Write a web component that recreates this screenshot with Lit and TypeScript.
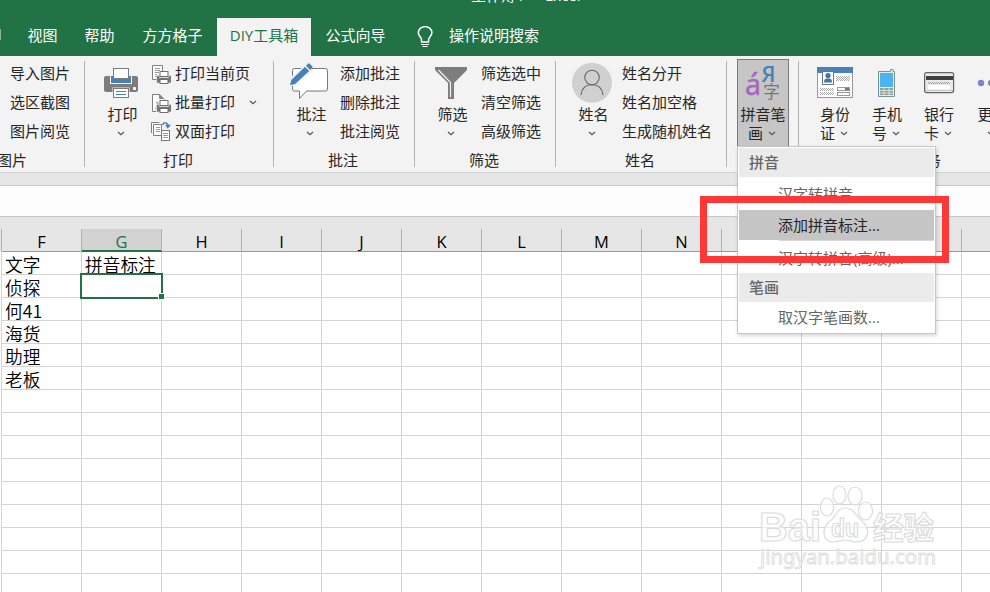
import { LitElement, html, css, svg, nothing, TemplateResult } from "lit";
import { customElement, property } from "lit/decorators.js";

const printerSmall = (x: number, y: number) => svg`
  <path d="M${x - 1.5} ${y + 4}h3v2h9v-2h3v7.500h-15z" fill="#777" stroke="#f3f3f3" stroke-width=".6" />
  <rect x=${x + 2} y=${y} width="8" height="5" fill="#fff" stroke="#6f6f6f" />
  <rect x=${x + 2} y=${y + 8} width="8" height="4" fill="#fff" stroke="#6f6f6f" />`;

const icons: Record<string, TemplateResult> = {
  printer: html`<svg viewBox="101 62 40 41">
    <rect x="104" y="76" width="34" height="16" rx="2" fill="#7d7d7d" />
    <rect x="110" y="76" width="22" height="8" fill="#f3f3f3" />
    <rect x="111" y="76" width="20" height="7" fill="#4a80ba" />
    <rect x="113.5" y="68.5" width="15" height="10" fill="#fff" stroke="#7d7d7d" />
    <rect x="133" y="87" width="3" height="3" rx="1" fill="#fff" />
    <rect x="112.5" y="87.5" width="17" height="11" fill="#f3f3f3" />
    <rect x="113.5" y="88.5" width="15" height="9" fill="#fff" stroke="#7d7d7d" />
    <path d="M116 91.5h10M116 94.5h10" stroke="#4a80ba" />
  </svg>`,
  comment: html`<svg viewBox="290 62 40 41">
    <path d="M294.500 68.500h31a2 2 0 0 1 2 2v18.500a2 2 0 0 1-2 2h-19l-7 7.500v-7.500h-5a2 2 0 0 1-2-2v-18.500a2 2 0 0 1 2-2z" fill="#fff" stroke="#777" />
    <path d="M288 87l2-9 16.500-14.500 7 7-16.500 14.500z" fill="#f3f3f3" />
    <path d="M299 84.500l12-11v4l-8 7z" fill="#fff" />
    <path d="M290 85.200l1.300-5.200 13.700-13.200 4.200 4.200-14 13z" fill="#4a80ba" />
    <path d="M306 65.800l2-2a1.200 1.200 0 0 1 1.700 0l2.500 2.500a1.200 1.200 0 0 1 0 1.700l-2 2z" fill="#4a80ba" />
  </svg>`,
  filter: html`<svg viewBox="431 62 40 41">
    <path d="M435 67h32v3l-13 13v16h-6v-16l-13-13z" fill="#7d7d7d" />
    <path d="M438.500 70l12 12.500v14.500" fill="none" stroke="#f3f3f3" stroke-width="1.200" />
  </svg>`,
  person: html`<svg viewBox="572 62 40 41">
    <circle cx="592" cy="82.800" r="20" fill="#d0d0d0" />
    <circle cx="592" cy="77.500" r="7.200" fill="none" stroke="#666" stroke-width="1.100" />
    <path d="M581 95c.8-7.500 5.500-10.300 11-10.300s10.200 2.800 11 10.300" fill="none" stroke="#666" stroke-width="1.100" />
  </svg>`,
  pinyin: html`<svg viewBox="743 62 40 41">
    <text x="745" y="95" font-size="29" fill="#a367be" stroke="#a367be" stroke-width=".4" font-family="Noto Sans" textLength="16" lengthAdjust="spacingAndGlyphs">á</text>
    <text x="761.500" y="81.500" font-size="21.500" font-weight="600" fill="#4a80ba" font-family="Open Sans" textLength="14" lengthAdjust="spacingAndGlyphs">Я</text>
    <text x="763" y="98" font-size="17" fill="#777" font-family="Noto Sans CJK SC">字</text>
  </svg>`,
  idcard: html`<svg viewBox="815 62 40 41">
    <rect x="817.5" y="67.500" width="35" height="30" fill="#fff" stroke="#999" />
    <rect x="817" y="67" width="36" height="6" fill="#4a80ba" />
    <rect x="822.5" y="71.500" width="11" height="13" fill="#fff" stroke="#777" />
    <circle cx="828" cy="75.500" r="2.600" fill="#3e76b2" /><path d="M824 82.500c0-4 2-4 4-4s4 0 4 4z" fill="#3e76b2" />
    <path d="M836 76.500h14M836 78.500h14M836 80.500h14M820 88.500h14M820 90.500h14M820 92.500h14M820 94.500h14" stroke="#aaa" stroke-dasharray="1 1" />
    <path d="M837 77.500h13M837 79.500h13M821 89.500h13M821 93.500h13" stroke="#aaa" stroke-dasharray="1 1" />
    <rect x="837.5" y="87.500" width="12" height="3" fill="#fff" stroke="#999" /><rect x="845" y="88" width="4" height="2" fill="#4a80ba" />
    <rect x="837.5" y="92.500" width="12" height="3" fill="#fff" stroke="#999" />
  </svg>`,
  phone: html`<svg viewBox="867 62 40 41">
    <path d="M878.500 71.500h12v-2h2.500v2h1.500v25h-16z" fill="#e5ecec" stroke="#7a9492" />
    <rect x="880" y="73" width="13" height="14" fill="#4db2f0" />
    <rect x="880" y="88" width="13" height="7" fill="#8ca09c" />
    <path d="M880 90.500h13M880 93h13M884 88v7M889 88v7" stroke="#e5ecec" stroke-width=".8" />
  </svg>`,
  bank: html`<svg viewBox="919 62 40 41">
    <rect x="924.600" y="72.600" width="29" height="20" rx="2" fill="#e9e9e9" stroke="#666" stroke-width="1.200" />
    <rect x="926" y="76" width="27" height="4" fill="#404040" />
    <path d="M928 82.500h22M929 83.500h22" stroke="#999" stroke-dasharray="1 1" />
    <rect x="928" y="85" width="22" height="4" fill="#fff" />
    <path d="M926 90.500h27" stroke="#ccc" />
  </svg>`,
  more: html`<svg viewBox="971 62 40 41">
    <circle cx="981" cy="83" r="3.200" fill="#7a86c8" /><circle cx="991" cy="83" r="3.200" fill="#7a86c8" /><circle cx="1001" cy="83" r="3.200" fill="#7a86c8" />
  </svg>`,
  page: html`<svg viewBox="151 63 20 20">
    <path d="M152.500 64.500h10v14h-10z" fill="#fff" stroke="#808080" />
    <path d="M155 67.500h5M155 69.500h5M155 71.500h4M155 73.500h2M155 75.500h2" stroke="#999" />
    ${printerSmall(158, 70.5)}
  </svg>`,
  batch: html`<svg viewBox="151 92 20 20">
    <path d="M152.500 93.500h7l5 5v12h-12z" fill="#fff" stroke="#808080" /><path d="M159.500 93.500v4h4" fill="#888" stroke="#808080" />
    <path d="M156 102c1-1.500 3 0 2 2s-2 3-2 4" fill="none" stroke="#aaa" stroke-width="1.500" />
    ${printerSmall(158, 99.5)}
  </svg>`,
  duplex: html`<svg viewBox="151 121 20 20">
    <path d="M151.500 132v-10.500h8M153.500 134.500v-11h8v11z" fill="#fff" stroke="#808080" />
    <path d="M156 126.500h4M156 128.500h4M156 130.500h4" stroke="#999" />
    <rect x="161.500" y="129.500" width="8" height="10" fill="#fff" stroke="#777" />
    <path d="M163 132.500h5M163 134.500h5M163 136.500h5" stroke="#999" />
    <path d="M162.500 124c1-3.500 5.500-2.500 5.500 1" fill="none" stroke="#4a80ba" stroke-width="1.500" /><path d="M165 123.800h6l-3.300 4z" fill="#4a80ba" />
  </svg>`,
  bulb: html`<svg viewBox="417 26 16 22" fill="none" stroke="#fff" stroke-width="1.500">
    <path d="M421.500 42v-2.500c0-2-3.200-3.500-3.200-7a6.700 5.800 0 0 1 13.600 0c0 3.500-3.300 5-3.300 7v2.500z" /><path d="M421 44.500h8M422.500 46.500h5" stroke-width="1.200" />
  </svg>`,
};

const chevron = html`<svg class="chev" viewBox="0 0 8 5"><path d="M1 1l3 2.700 3-2.700" fill="none" stroke="#555" stroke-width="1.200" /></svg>`;

@customElement("big-button")
class BigButton extends LitElement {
  @property() icon = "";
  @property() label = "";
  @property() second = "";
  static styles = css`
    :host { display: flex; flex-direction: column; align-items: center; width: 52px; flex: none; box-sizing: border-box; height: 88px; padding-top: 3px; }
    :host([active]) { background: #c6c6c6; border: 1px solid #7b7b7b; padding-top: 2px; }
    svg { display: block; flex: none; width: 40px; height: 41px; }
    .chev { width: 8px; height: 5px; }
    .label { height: 22px; line-height: 22px; white-space: nowrap; }
    :host([shift]) .label { padding-left: 3px; }
    .second { display: flex; align-items: center; gap: 5px; height: 16px; line-height: 16px; }
    .second span { margin-left: -2px; }
  `;
  render() {
    return html`${icons[this.icon]}
      <div class="label">${this.label}</div>
      <div class="second">${this.second ? html`<span>${this.second}</span>` : nothing}${chevron}</div>`;
  }
}

interface Item { text: string; icon?: string; drop?: boolean }
interface Group { width: number; label: string; cls?: string; buttons: string[][]; items: Item[] }

const groups: Group[] = [
  { width: 84, label: "图片", cls: "cut", buttons: [], items: [{ text: "导入图片" }, { text: "选区截图" }, { text: "图片阅览" }] },
  { width: 188, label: "打印", buttons: [["printer", "打印", ""]], items: [{ text: "打印当前页", icon: "page" }, { text: "批量打印", icon: "batch", drop: true }, { text: "双面打印", icon: "duplex" }] },
  { width: 140, label: "批注", buttons: [["comment", "批注", ""]], items: [{ text: "添加批注" }, { text: "删除批注" }, { text: "批注阅览" }] },
  { width: 140, label: "筛选", buttons: [["filter", "筛选", ""]], items: [{ text: "筛选选中" }, { text: "清空筛选" }, { text: "高级筛选" }] },
  { width: 170, label: "姓名", buttons: [["person", "姓名", ""]], items: [{ text: "姓名分开" }, { text: "姓名加空格" }, { text: "生成随机姓名" }] },
  { width: 71, label: "", buttons: [["pinyin", "拼音笔", "画"]], items: [] },
  { width: 256, label: "财务", cls: "wide", buttons: [["idcard", "身份", "证"], ["phone", "手机", "号"], ["bank", "银行", "卡"], ["more", "更多", ""]], items: [] },
];

@customElement("ribbon-bar")
class RibbonBar extends LitElement {
  static styles = css`
    :host { display: flex; height: 116px; background: #f3f3f3; color: #262626; overflow: hidden; }
    .group { flex: none; display: flex; flex-direction: column; }
    .sep { flex: none; width: 1px; height: 106px; margin-top: 5px; background: #b3b3b3; }
    .body { display: flex; gap: 4px; padding: 3px 0 0 10px; height: 91px; box-sizing: border-box; }
    .items { display: flex; flex-direction: column; white-space: nowrap; }
    .item { display: flex; align-items: center; height: 29px; line-height: 29px; }
    .item svg { width: 20px; height: 20px; margin: 0 4px 0 0; }
    .item svg.chev { width: 8px; height: 5px; margin: 0 0 0 14px; }
    .label { text-align: center; height: 24px; line-height: 24px; padding: 1px 2px 0 0; }
    .cut .label { text-align: left; margin-left: -3px; }
    .wide .body { gap: 0; }
  `;
  render() {
    return groups.map((g) => html`
      <div class="group ${g.cls ?? ""}" style="width:${g.width}px">
        <div class="body">
          ${g.buttons.map((b) => html`<big-button .icon=${b[0]} .label=${b[1]} .second=${b[2]} ?active=${b[0] === "pinyin"} ?shift=${!b[2]}></big-button>`)}
          <div class="items">${g.items.map((i) => html`<div class="item">${i.icon ? icons[i.icon] : nothing}<span>${i.text}</span>${i.drop ? chevron : nothing}</div>`)}</div>
        </div>
        <div class="label">${g.label}</div>
      </div><div class="sep"></div>`);
  }
}

const columns = ["F", "G", "H", "I", "J", "K", "L", "M", "N", "O", "P", "Q", "R"];
const cells = [["文字", "拼音标注"], ["侦探"], ["何41"], ["海货"], ["助理"], ["老板"]];

@customElement("work-sheet")
class WorkSheet extends LitElement {
  static styles = css`
    :host { display: block; background: #fff; overflow: hidden; color: #000; font-family: "Noto Sans CJK SC", sans-serif; font-weight: 350; }
    .row { display: grid; grid-template-columns: repeat(13, 80px); width: 1040px; margin-left: 2px; }
    .head { background: #e6e6e6; height: 35px; box-sizing: border-box; padding-top: 12px; border-bottom: 1px solid #999; box-shadow: -2px 0 #e6e6e6; }
    .head .cell { height: 22px; text-align: center; font: 16.500px/25px "Open Sans", sans-serif; border-right: 1px solid #b1b1b1; }
    .head .cell:first-child { box-shadow: -1px 0 #b1b1b1; }
    .head .sel { background: #d2d2d2; color: #217346; height: 23px; border-bottom: 2px solid #217346; box-shadow: -1px 0 #b1b1b1; }
    .cell { box-sizing: border-box; height: 23px; border-right: 1px solid #d4d4d4; }
    .line .cell { border-bottom: 1px solid #d4d4d4; font-size: 17.700px; line-height: 24px; padding-left: 3px; white-space: nowrap; }
    .line { box-shadow: -1px 0 #d4d4d4; }
    .line .active { position: relative; }
    .active::before { content: ""; position: absolute; inset: -2px -2px -2px -2px; border: 2px solid #217346; }
    .active::after { content: ""; position: absolute; right: -3px; bottom: -2px; width: 5px; height: 5px; background: #217346; outline: 1px solid #fff; }
  `;
  render() {
    return html`<div class="row head">${columns.map((c) => html`<div class="cell ${c === "G" ? "sel" : ""}">${c}</div>`)}</div>
      ${Array.from({ length: 15 }, (_, r) => html`<div class="row line">${columns.map((_, c) => html`<div class="cell ${r === 1 && c === 1 ? "active" : ""}">${cells[r]?.[c] ?? ""}</div>`)}</div>`)}`;
  }
}

@customElement("drop-menu")
class DropMenu extends LitElement {
  static styles = css`
    :host { display: block; box-sizing: border-box; background: #fff; border: 1px solid #c6c6c6; padding: 1px; box-shadow: 1px 2px 4px rgba(0,0,0,.16); color: #666; }
    .title { height: 29px; line-height: 28px; padding-left: 10px; background: #ebebeb; font-weight: 500; }
    .item { height: 30px; line-height: 30px; padding-left: 39px; }
    .first { height: 33px; line-height: 35px; }
    .hot { background: #c5c5c5; color: #262626; }
    .rule { height: 1px; background: #d8d8d8; margin-left: 40px; }
    .third { height: 32px; line-height: 34px; }
    .last { line-height: 31px; }
  `;
  render() {
    return html`<div class="title">拼音</div>
      <div class="item first">汉字转拼音...</div>
      <div class="item hot">添加拼音标注...</div>
      <div class="rule"></div>
      <div class="item third">汉字转拼音(高级)...</div>
      <div class="title">笔画</div>
      <div class="item last">取汉字笔画数...</div>`;
  }
}

@customElement("app-root")
class AppRoot extends LitElement {
  static styles = css`
    :host { display: block; position: relative; width: 990px; height: 592px; overflow: hidden; background: #fff; font: 15px/20px "Open Sans", "Noto Sans CJK SC", sans-serif; }
    .top { height: 56px; background: #217346; color: #fff; display: flex; flex-direction: column; overflow: hidden; }
    .title { height: 18px; line-height: 18px; margin-top: -14px; margin-bottom: 14px; padding-left: 471px; flex: none; white-space: pre; }
    .tabs { display: flex; height: 38px; line-height: 35px; flex: none; white-space: nowrap; }
    .tab { width: 57px; text-align: center; }
    .edge { width: 14px; box-sizing: border-box; }
    .edge::before { content: ""; display: block; width: 1px; height: 11px; margin-top: 11px; background: #8db39e; }
    .four { width: 89px; }
    .on { width: 94px; background: #f3f3f3; color: #217346; }
    .bulb { width: 16px; height: 22px; margin: 8px 16px 0 17px; }
    .bulb svg { display: block; }
    .gap { height: 14px; background: #e6e6e6; border-top: 1px solid #d2d2d2; border-bottom: 1px solid #c6c6c6; box-sizing: border-box; }
    .formula { height: 31px; background: #fdfdfd; border-bottom: 1px solid #c6c6c6; box-sizing: border-box; }
    drop-menu { position: absolute; left: 737px; top: 146px; width: 199px; height: 188px; }
    .frame { position: absolute; left: 700px; top: 196px; width: 249px; height: 67px; box-sizing: border-box; border: 7px solid #fd3837; }
    .mark { position: absolute; left: 750px; top: 480px; }
  `;
  render() {
    return html`
      <div class="top">
        <div class="title">工作薄1  -  Excel</div>
        <div class="tabs">
          <div class="edge"></div>
          <div class="tab">视图</div><div class="tab">帮助</div><div class="tab four">方方格子</div>
          <div class="tab on">DIY工具箱</div><div class="tab four">公式向导</div>
          <div class="bulb">${icons.bulb}</div><div>操作说明搜索</div>
        </div>
      </div>
      <ribbon-bar></ribbon-bar>
      <div class="gap"></div>
      <div class="formula"></div>
      <work-sheet></work-sheet>
      <drop-menu></drop-menu>
      <div class="frame"></div>
      <svg class="mark" width="200" height="100" viewBox="750 480 200 100" fill="#fff" fill-opacity=".6" stroke="#dcdcdc" stroke-width="1.200" font-family="Liberation Sans" font-weight="700">
        <text x="759" y="541" font-size="40" textLength="62" lengthAdjust="spacingAndGlyphs">Bai</text>
        <ellipse cx="827" cy="507" rx="6.500" ry="9" /><ellipse cx="839.500" cy="495" rx="6.500" ry="9" />
        <ellipse cx="855" cy="496" rx="7" ry="9" /><ellipse cx="865.500" cy="511" rx="7" ry="9" />
        <path d="M845 508c-8 0-9 9-15 13-9 7-8 21 4 21 5 0 7-2 11-2s6 2 11 2c13 0 15-13 6-21-6-5-8-13-17-13z" />
        <text x="831" y="537" font-size="25" textLength="28" lengthAdjust="spacingAndGlyphs">du</text>
        <text x="873" y="539" font-size="31" font-family="Noto Sans CJK SC" textLength="61" lengthAdjust="spacingAndGlyphs">经验</text>
        <text x="760" y="564" font-size="20" font-weight="400" stroke-width=".9" font-family="Noto Sans" textLength="176" lengthAdjust="spacingAndGlyphs">jingyan.baidu.com</text>
      </svg>`;
  }
}
